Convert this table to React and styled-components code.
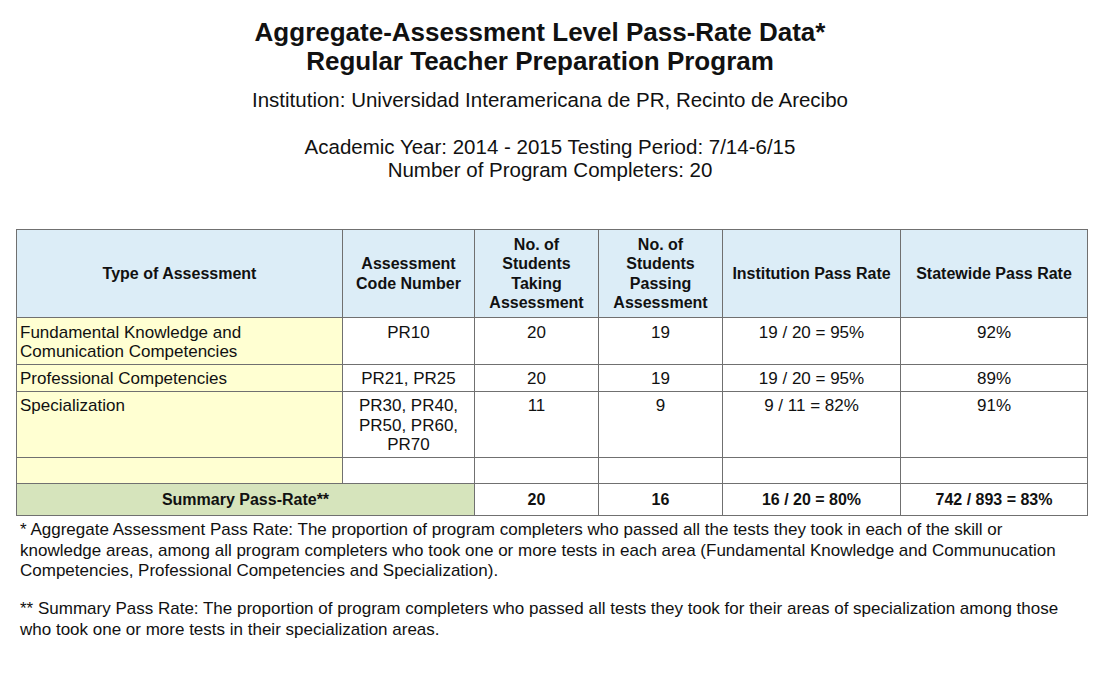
import React from 'react';
import styled, { createGlobalStyle } from 'styled-components';

const GlobalStyle = createGlobalStyle`
  html, body {
    margin: 0;
    padding: 0;
    background: #ffffff;
  }
  body {
    font-family: "Liberation Sans", Arial, sans-serif;
    color: #111111;
  }
`;

const Page = styled.div`
  width: 1100px;
  height: 690px;
  padding-top: 18px;
  box-sizing: border-box;
  overflow: hidden;
`;

const TitleBlock = styled.div`
  text-align: center;
  padding-right: 20px;
`;

const Title = styled.h1`
  margin: 0;
  font-size: 26px;
  line-height: 29px;
  font-weight: bold;
`;

const InfoLine = styled.p`
  margin: ${(p) => p.$top || 0}px 0 0;
  text-align: center;
  font-size: 20.5px;
  line-height: 23px;
`;

const Table = styled.table`
  margin: 48px 0 0 16px;
  width: 1071px;
  border-collapse: collapse;
  table-layout: fixed;
  font-size: 17px;
  line-height: 19.5px;
`;

const Th = styled.th`
  background: #dcedf7;
  border: 1px solid #707070;
  height: 87px;
  padding: 0 3px;
  font-size: 16px;
  font-weight: bold;
  vertical-align: middle;
  text-align: center;
`;

const Td = styled.td`
  border: 1px solid #707070;
  padding: 4.5px 3px 2px;
  vertical-align: top;
  text-align: ${(p) => (p.$left ? 'left' : 'center')};
  background: ${(p) => (p.$yellow ? '#ffffd2' : '#ffffff')};
  height: ${(p) => (p.$h ? `${p.$h}px` : 'auto')};
`;

const SummaryCell = styled.td`
  border: 1px solid #707070;
  height: 31px;
  padding: 0 3px;
  vertical-align: middle;
  text-align: center;
  font-size: 16px;
  font-weight: bold;
  background: ${(p) => (p.$green ? '#d6e4bc' : '#ffffff')};
`;

const Notes = styled.div`
  margin: 4px 0 0 20px;
  width: 1055px;
  font-size: 17px;
  line-height: 20.5px;
`;

const Note = styled.p`
  margin: 0 0 17.5px;
`;

const rows = [
  {
    type: (
      <>
        Fundamental Knowledge and
        <br />
        Comunication Competencies
      </>
    ),
    code: 'PR10',
    taking: '20',
    passing: '19',
    inst: '19 / 20 = 95%',
    state: '92%',
  },
  {
    type: 'Professional Competencies',
    code: 'PR21, PR25',
    taking: '20',
    passing: '19',
    inst: '19 / 20 = 95%',
    state: '89%',
  },
  {
    type: 'Specialization',
    code: (
      <>
        PR30, PR40,
        <br />
        PR50, PR60,
        <br />
        PR70
      </>
    ),
    taking: '11',
    passing: '9',
    inst: '9 / 11 = 82%',
    state: '91%',
  },
];

export default function App() {
  return (
    <Page>
      <GlobalStyle />
      <TitleBlock>
        <Title>Aggregate-Assessment Level Pass-Rate Data*</Title>
        <Title>Regular Teacher Preparation Program</Title>
      </TitleBlock>
      <InfoLine $top={12}>
        Institution: Universidad Interamericana de PR, Recinto de Arecibo
      </InfoLine>
      <InfoLine $top={24}>Academic Year: 2014 - 2015 Testing Period: 7/14-6/15</InfoLine>
      <InfoLine>Number of Program Completers: 20</InfoLine>

      <Table>
        <colgroup>
          <col style={{ width: 326 }} />
          <col style={{ width: 132 }} />
          <col style={{ width: 124 }} />
          <col style={{ width: 124 }} />
          <col style={{ width: 178 }} />
          <col style={{ width: 187 }} />
        </colgroup>
        <thead>
          <tr>
            <Th>Type of Assessment</Th>
            <Th>
              Assessment
              <br />
              Code Number
            </Th>
            <Th>
              No. of
              <br />
              Students
              <br />
              Taking
              <br />
              Assessment
            </Th>
            <Th>
              No. of
              <br />
              Students
              <br />
              Passing
              <br />
              Assessment
            </Th>
            <Th>Institution Pass Rate</Th>
            <Th>Statewide Pass Rate</Th>
          </tr>
        </thead>
        <tbody>
          {rows.map((r, i) => (
            <tr key={i}>
              <Td $left $yellow>{r.type}</Td>
              <Td>{r.code}</Td>
              <Td>{r.taking}</Td>
              <Td>{r.passing}</Td>
              <Td>{r.inst}</Td>
              <Td>{r.state}</Td>
            </tr>
          ))}
          <tr>
            <Td $yellow $h={19} />
            <Td />
            <Td />
            <Td />
            <Td />
            <Td />
          </tr>
          <tr>
            <SummaryCell $green colSpan={2}>Summary Pass-Rate**</SummaryCell>
            <SummaryCell>20</SummaryCell>
            <SummaryCell>16</SummaryCell>
            <SummaryCell>16 / 20 = 80%</SummaryCell>
            <SummaryCell>742 / 893 = 83%</SummaryCell>
          </tr>
        </tbody>
      </Table>

      <Notes>
        <Note>
          * Aggregate Assessment Pass Rate: The proportion of program completers who passed all the
          tests they took in each of the skill or knowledge areas, among all program completers who
          took one or more tests in each area (Fundamental Knowledge and Communucation Competencies,
          Professional Competencies and Specialization).
        </Note>
        <Note>
          ** Summary Pass Rate: The proportion of program completers who passed all tests they took
          for their areas of specialization among those who took one or more tests in their
          specialization areas.
        </Note>
      </Notes>
    </Page>
  );
}
